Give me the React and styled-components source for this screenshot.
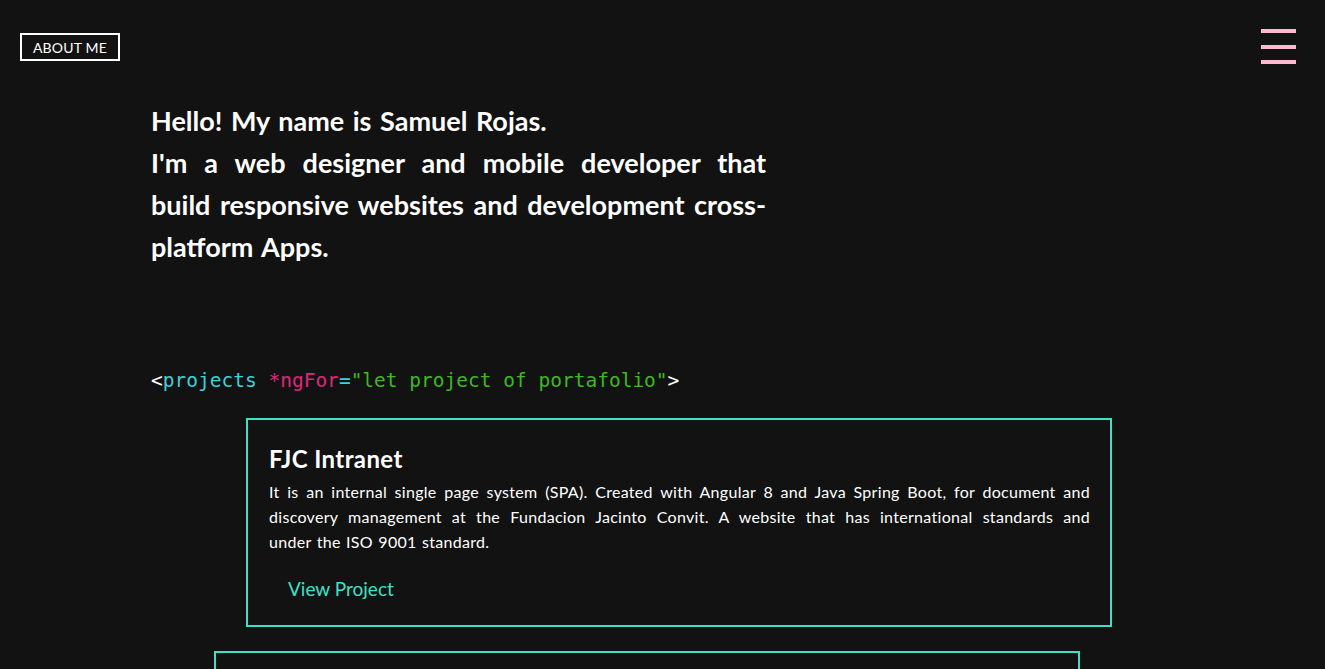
import React from "react";
import styled, { createGlobalStyle } from "styled-components";

const Global = createGlobalStyle`
  html, body { margin: 0; padding: 0; background: #121212; }
  body { font-family: "Lato", "Open Sans", sans-serif; color: #ffffff; }
  * { box-sizing: border-box; }
`;

const Page = styled.div`
  min-height: 669px;
  background: #121212;
  padding: 29px 29px 0 20px;
`;

const TopBar = styled.header`
  display: flex;
  justify-content: space-between;
  align-items: flex-start;
`;

const AboutButton = styled.button`
  margin-top: 4px;
  height: 28px;
  width: 100px;
  background: transparent;
  border: 2px solid #ffffff;
  color: #ffffff;
  font-family: "Lato", sans-serif;
  font-size: 14px;
  letter-spacing: 0.2px;
  padding: 0;
  cursor: pointer;
`;

const Burger = styled.button`
  width: 35px;
  height: 35px;
  display: flex;
  flex-direction: column;
  justify-content: space-between;
  background: transparent;
  border: 0;
  padding: 0;
  cursor: pointer;
`;

const BurgerBar = styled.span`
  display: block;
  height: 4px;
  background: #ffb8cd;
`;

const Main = styled.main`
  padding-left: 131px;
`;

const Intro = styled.h1`
  margin: 36px 0 0;
  width: 615px;
  font-family: "Lato", sans-serif;
  font-weight: 700;
  font-size: 27px;
  line-height: 42px;
  word-spacing: 2px;
`;

const Line = styled.span`
  display: block;
  white-space: nowrap;
  text-align: ${(p) => (p.$justify ? "justify" : "left")};
  text-align-last: ${(p) => (p.$justify ? "justify" : "auto")};
`;

const Code = styled.div`
  margin-top: 101px;
  font-family: "DejaVu Sans Mono", monospace;
  font-size: 19.5px;
  line-height: 24px;
  color: #ffffff;
`;

const Tag = styled.span`
  color: ${(p) => p.$c};
`;

const Card = styled.article`
  margin-top: ${(p) => p.$top}px;
  margin-left: ${(p) => p.$offset}px;
  width: 866px;
  border: 2px solid #40e0c8;
  padding: 24px 20px 24px 21px;
`;

const CardTitle = styled.h2`
  margin: 0;
  font-family: "Lato", sans-serif;
  font-weight: 700;
  font-size: 24px;
  line-height: 30px;
  letter-spacing: 0.4px;
`;

const CardText = styled.p`
  margin: 5px 0 0;
  font-family: "Lato", sans-serif;
  font-size: 16px;
  line-height: 25px;
  letter-spacing: 0.3px;
  word-spacing: 1px;
`;

const ViewLink = styled.a`
  display: inline-block;
  margin: 23px 0 0 19px;
  font-family: "Lato", sans-serif;
  font-size: 19px;
  line-height: 24px;
  color: #40e0c8;
  text-decoration: none;
`;

const introLines = [
  "Hello! My name is Samuel Rojas.",
  "I'm a web designer and mobile developer that",
  "build responsive websites and development cross-",
  "platform Apps.",
];

const projects = [
  {
    title: "FJC Intranet",
    lines: [
      "It is an internal single page system (SPA). Created with Angular 8 and Java Spring Boot, for document and",
      "discovery management at the Fundacion Jacinto Convit. A website that has international standards and",
      "under the ISO 9001 standard.",
    ],
    offset: 95,
    top: 25,
  },
  {
    title: "",
    lines: [],
    offset: 63,
    top: 24,
  },
];

export default function App() {
  return (
    <>
      <Global />
      <Page>
        <TopBar>
          <AboutButton>ABOUT ME</AboutButton>
          <Burger aria-label="menu">
            <BurgerBar />
            <BurgerBar />
            <BurgerBar />
          </Burger>
        </TopBar>
        <Main>
          <Intro>
            {introLines.map((l, i) => (
              <Line key={i} $justify={i === 1 || i === 2}>
                {l}
              </Line>
            ))}
          </Intro>
          <Code>
            &lt;<Tag $c="#3fd0d8">projects</Tag> <Tag $c="#e0267a">*ngFor</Tag>
            <Tag $c="#3fd0d8">=</Tag>
            <Tag $c="#3cba1e">"let project of portafolio"</Tag>&gt;
          </Code>
          {projects.map((p, i) => (
            <Card key={i} $offset={p.offset} $top={p.top}>
              {p.title && <CardTitle>{p.title}</CardTitle>}
              {p.lines.length > 0 && (
                <CardText>
                  {p.lines.map((l, j) => (
                    <Line key={j} $justify={j < p.lines.length - 1}>
                      {l}
                    </Line>
                  ))}
                </CardText>
              )}
              {p.title && <ViewLink href="#">View Project</ViewLink>}
            </Card>
          ))}
        </Main>
      </Page>
    </>
  );
}
